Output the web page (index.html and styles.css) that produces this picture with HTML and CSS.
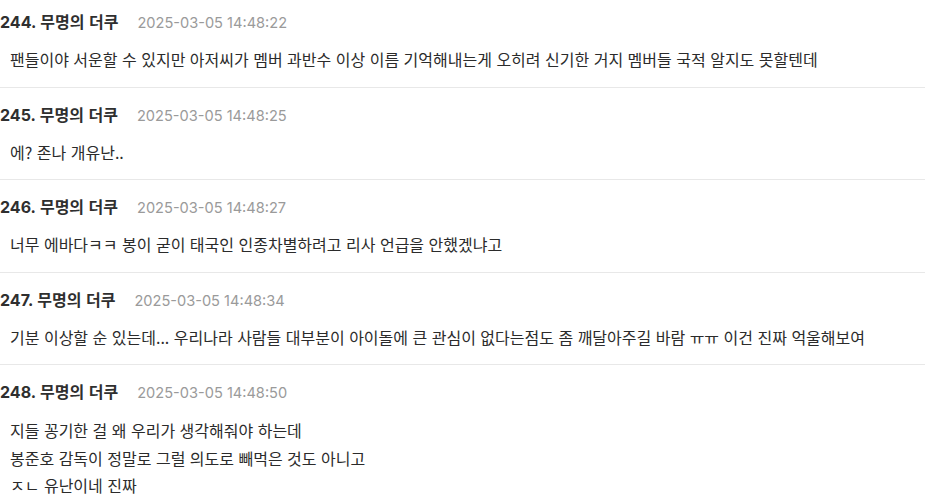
FILE: index.html
```html
<!DOCTYPE html>
<html lang="ko">
<head>
<meta charset="utf-8">
<link rel="stylesheet" href="styles.css">
</head>
<body>
<div class="list">
  <div class="item">
    <div class="head"><span class="num">244.</span><span class="name">무명의 더쿠</span><span class="date">2025-03-05 14:48:22</span></div>
    <div class="body">팬들이야 서운할 수 있지만 아저씨가 멤버 과반수 이상 이름 기억해내는게 오히려 신기한 거지 멤버들 국적 알지도 못할텐데</div>
  </div>
  <div class="item">
    <div class="head"><span class="num">245.</span><span class="name">무명의 더쿠</span><span class="date">2025-03-05 14:48:25</span></div>
    <div class="body">에? 존나 개유난..</div>
  </div>
  <div class="item">
    <div class="head"><span class="num">246.</span><span class="name">무명의 더쿠</span><span class="date">2025-03-05 14:48:27</span></div>
    <div class="body">너무 에바다ㅋㅋ 봉이 굳이 태국인 인종차별하려고 리사 언급을 안했겠냐고</div>
  </div>
  <div class="item">
    <div class="head"><span class="num">247.</span><span class="name">무명의 더쿠</span><span class="date">2025-03-05 14:48:34</span></div>
    <div class="body">기분 이상할 순 있는데... 우리나라 사람들 대부분이 아이돌에 큰 관심이 없다는점도 좀 깨달아주길 바람 ㅠㅠ 이건 진짜 억울해보여</div>
  </div>
  <div class="item">
    <div class="head"><span class="num">248.</span><span class="name">무명의 더쿠</span><span class="date">2025-03-05 14:48:50</span></div>
    <div class="body multi">지들 꽁기한 걸 왜 우리가 생각해줘야 하는데<br>봉준호 감독이 정말로 그럴 의도로 빼먹은 것도 아니고<br>ㅈㄴ 유난이네 진짜</div>
  </div>
</div>
</body>
</html>
```
FILE: styles.css
```css
html, body {
  margin: 0;
  padding: 0;
  background: #ffffff;
}
body {
  font-family: "Noto Sans CJK KR", "Noto Sans", sans-serif;
  color: #2b2b2b;
  overflow: hidden;
}
.list {
  margin-top: -6px;
}
.item {
  padding: 16px 0 13.5px;
  border-top: 1px solid #e8e8e8;
}
.item:first-child {
  border-top-color: transparent;
}
.head {
  display: flex;
  align-items: baseline;
  height: 20px;
  line-height: 20px;
}
.num {
  font-family: "Inter", "Noto Sans", sans-serif;
  font-size: 16px;
  font-weight: 700;
  color: #2f2f2f;
  margin-right: 4px;
}
.name {
  font-size: 16px;
  font-weight: 700;
  color: #2f2f2f;
}
.date {
  margin-left: 19px;
  font-family: "Inter", "Noto Sans", sans-serif;
  font-size: 14.6px;
  color: #9a9a9a;
}
.body {
  margin-top: 14px;
  padding-left: 10px;
  font-size: 16px;
  line-height: 28px;
  color: #2b2b2b;
  white-space: nowrap;
}
.body.multi {
  margin-top: 16px;
  line-height: 27.5px;
}
```
